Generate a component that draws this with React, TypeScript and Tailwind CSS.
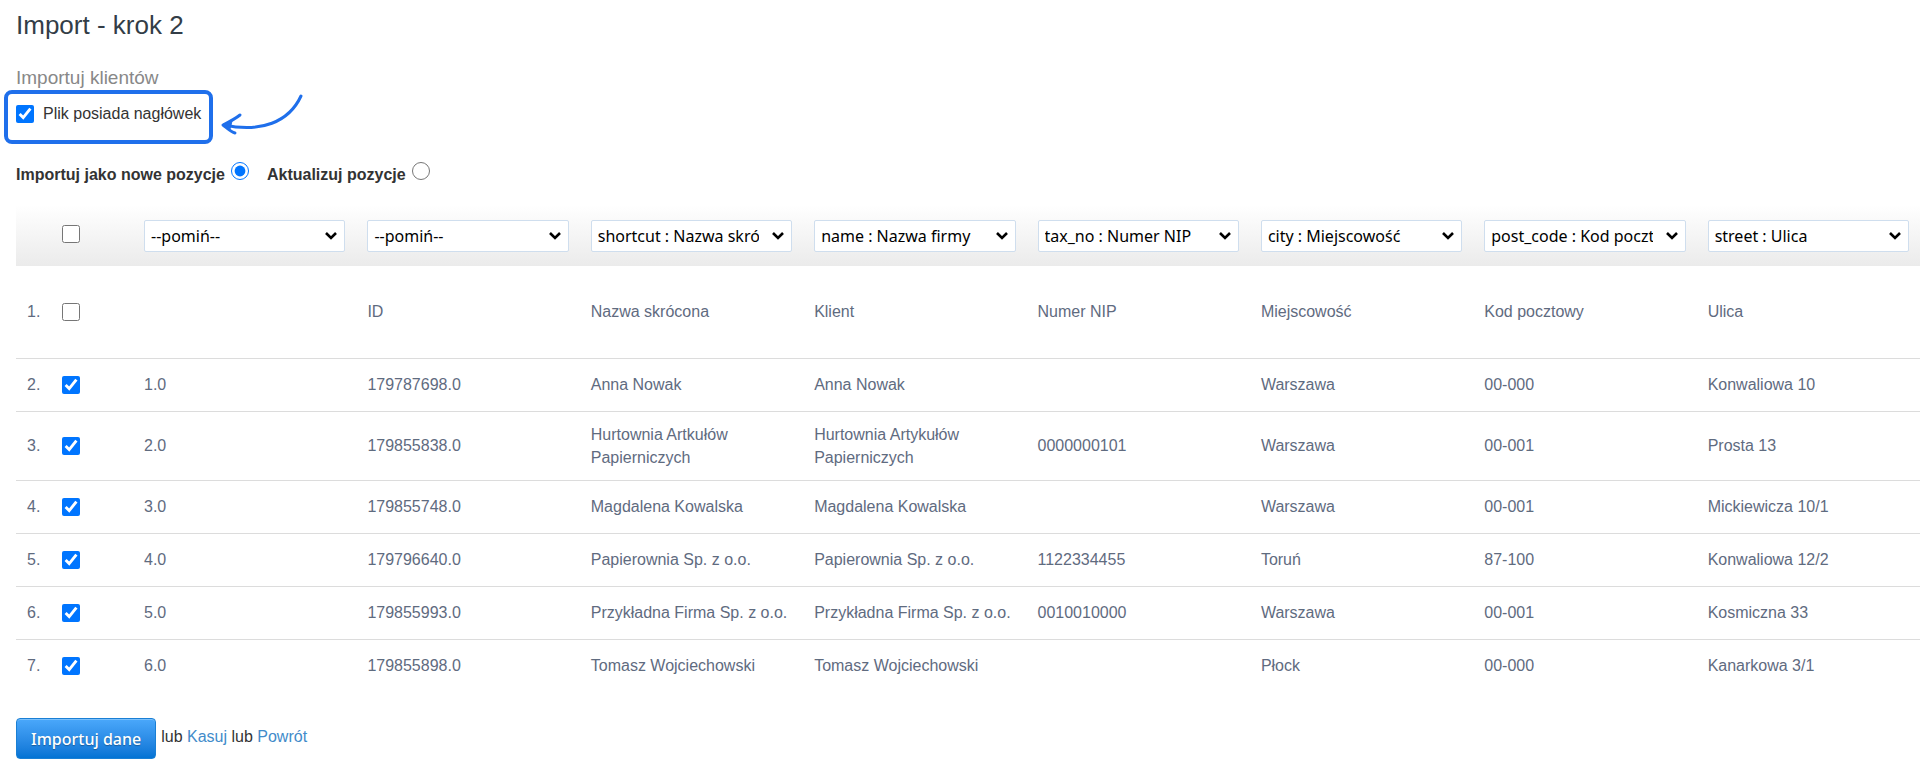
import React from 'react';
import { clsx } from 'clsx';

interface ImportRow {
  checked: boolean;
  cells: string[];
}

const MAPPINGS = [
  '--pomiń--',
  '--pomiń--',
  'shortcut : Nazwa skrócona',
  'name : Nazwa firmy',
  'tax_no : Numer NIP',
  'city : Miejscowość',
  'post_code : Kod pocztowy',
  'street : Ulica',
];

const ROWS: ImportRow[] = [
  { checked: false, cells: ['', 'ID', 'Nazwa skrócona', 'Klient', 'Numer NIP', 'Miejscowość', 'Kod pocztowy', 'Ulica'] },
  { checked: true, cells: ['1.0', '179787698.0', 'Anna Nowak', 'Anna Nowak', '', 'Warszawa', '00-000', 'Konwaliowa 10'] },
  { checked: true, cells: ['2.0', '179855838.0', 'Hurtownia Artkułów Papierniczych', 'Hurtownia Artykułów Papierniczych', '0000000101', 'Warszawa', '00-001', 'Prosta 13'] },
  { checked: true, cells: ['3.0', '179855748.0', 'Magdalena Kowalska', 'Magdalena Kowalska', '', 'Warszawa', '00-001', 'Mickiewicza 10/1'] },
  { checked: true, cells: ['4.0', '179796640.0', 'Papierownia Sp. z o.o.', 'Papierownia Sp. z o.o.', '1122334455', 'Toruń', '87-100', 'Konwaliowa 12/2'] },
  { checked: true, cells: ['5.0', '179855993.0', 'Przykładna Firma Sp. z o.o.', 'Przykładna Firma Sp. z o.o.', '0010010000', 'Warszawa', '00-001', 'Kosmiczna 33'] },
  { checked: true, cells: ['6.0', '179855898.0', 'Tomasz Wojciechowski', 'Tomasz Wojciechowski', '', 'Płock', '00-000', 'Kanarkowa 3/1'] },
];

// Hand-drawn arrow pointing at the header option
const HintArrow: React.FC = () => (
  <svg
    className="absolute top-0 left-full ml-2.5 h-[48px] w-[84px]"
    viewBox="0 0 84 48"
    fill="none"
    stroke="#1f6feb"
    strokeLinecap="round"
    strokeLinejoin="round"
    aria-hidden="true"
  >
    <path d="M82 2C70 28 42 39 5 31" strokeWidth="3" />
    <path d="M21 21C16 25 10 28 4 31C8 34 12 38 16 39" strokeWidth="3" />
    <path d="M4 31L13 27L11 35Z" fill="#1f6feb" strokeWidth="1" />
  </svg>
);

const MappingSelect: React.FC<{ value: string; column: number }> = ({ value, column }) => (
  <div className="relative">
    <select
      aria-label={`Kolumna ${column}`}
      defaultValue={value}
      className="block h-8 w-full appearance-none rounded-xs border border-[#cfdeee] bg-white pr-8 pl-1.5 font-['Noto_Sans',sans-serif] text-base text-black"
    >
      <option>{value}</option>
    </select>
    <svg className="pointer-events-none absolute top-3 right-2 h-2 w-3" viewBox="0 0 12 8" fill="none" aria-hidden="true">
      <path d="M1 1L6 6L11 1" stroke="#000" strokeWidth="2.6" />
    </svg>
  </div>
);

export default function App() {
  return (
    <main className="min-h-screen bg-white pt-[9px] pl-4 font-['Liberation_Sans',Arial,sans-serif] text-base text-[#333]">
      <h1 className="text-[26px] leading-8 text-[#333d47]">Import - krok 2</h1>
      <h2 className="mt-6 text-[19px] leading-[25px] text-[#888]">Importuj klientów</h2>

      <div className="relative -ml-3 w-fit rounded-lg border-4 border-[#1f6feb] pt-2 pr-2 pb-3.5 pl-2">
        <label className="flex items-center gap-[9px] leading-6">
          <input type="checkbox" defaultChecked className="size-[18px]" />
          Plik posiada nagłówek
        </label>
        <HintArrow />
      </div>

      <div className="mt-[18px] flex gap-[18px] font-bold leading-6">
        <label className="flex items-center gap-1.5">
          Importuj jako nowe pozycje
          <input type="radio" name="mode" defaultChecked className="mb-2 size-[18px]" />
        </label>
        <label className="flex items-center gap-1.5">
          Aktualizuj pozycje
          <input type="radio" name="mode" className="mb-2 size-[18px]" />
        </label>
      </div>

      <table className="mt-[17px] w-full table-fixed border-collapse text-left text-[#5f6b7f]">
        <colgroup>
          <col className="w-[35px]" />
          <col className="w-[82px]" />
          <col span={8} />
        </colgroup>
        <thead>
          <tr className="h-[61px] bg-linear-to-b from-white to-[#ebebeb]">
            <td />
            <td className="px-[11px] pb-1">
              <input type="checkbox" aria-label="Zaznacz wszystkie" className="block size-[18px]" />
            </td>
            {MAPPINGS.map((value, i) => (
              <th key={i} className="px-[11px] font-normal">
                <MappingSelect value={value} column={i + 1} />
              </th>
            ))}
          </tr>
        </thead>
        <tbody>
          {ROWS.map((row, i) => (
            <tr
              key={i}
              className={clsx(
                'border-b border-[#dcdcdc] last:border-b-0',
                i === 0 ? 'h-[92px]' : 'h-[53px]',
              )}
            >
              <td className="pl-[11px]">{i + 1}.</td>
              <td className="px-[11px]">
                <input
                  type="checkbox"
                  aria-label={`Wiersz ${i + 1}`}
                  defaultChecked={row.checked}
                  className="block size-[18px]"
                />
              </td>
              {row.cells.map((cell, j) => (
                <td key={j} className="px-[11px] py-[11px] leading-[23px]">{cell}</td>
              ))}
            </tr>
          ))}
        </tbody>
      </table>

      <div className="mt-[26px] flex items-center gap-[5px]">
        <button
          type="button"
          className="h-[41px] rounded-[4px] border border-[#1a7fd4] bg-linear-to-b from-[#4aa8fb] to-[#0273d4] px-3.5 font-['Noto_Sans',sans-serif] text-base font-medium text-white shadow-[inset_0_1px_0_#7cc0fb] text-shadow-[0_1px_1px_#0000004d]"
        >
          Importuj dane
        </button>
        <p className="pb-1">
          lub <a href="#kasuj" className="text-[#428bca]">Kasuj</a> lub{' '}
          <a href="#powrot" className="text-[#428bca]">Powrót</a>
        </p>
      </div>
    </main>
  );
}
